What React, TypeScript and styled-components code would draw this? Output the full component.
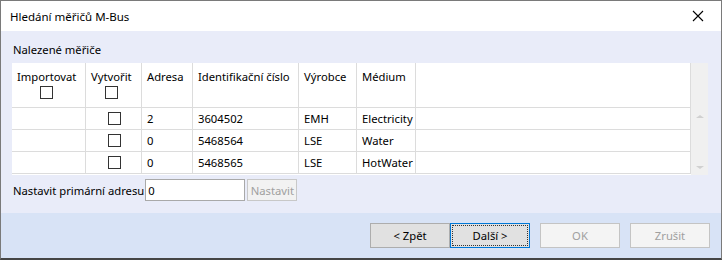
import { Fragment } from 'react';
import styled, { createGlobalStyle } from 'styled-components';

const GlobalStyle = createGlobalStyle`
  html, body {
    margin: 0;
    padding: 0;
    background: #ffffff;
  }
  body {
    font-family: 'Noto Sans', 'Segoe UI', sans-serif;
    font-size: 11.25px;
    color: #000;
  }
`;

const Window = styled.div`
  width: 722px;
  height: 260px;
  box-sizing: border-box;
  border: 1px solid #7a7a7a;
  border-bottom: 2px solid #454545;
  display: flex;
  flex-direction: column;
  background: #d8e3f6;
`;

const TitleBar = styled.div`
  height: 30px;
  flex: none;
  background: #ffffff;
  display: flex;
  align-items: center;
  justify-content: space-between;
  padding: 0 0 0 9px;
`;

const Title = styled.span`
  font-size: 11.5px;
`;

const CloseBtn = styled.div`
  width: 46px;
  height: 30px;
  display: flex;
  align-items: center;
  justify-content: center;
`;

const Body = styled.div`
  background: #e9ecf9;
  padding: 11px 12px 12px 11px;
  display: flex;
  flex-direction: column;
`;

const SectionLabel = styled.div`
  line-height: 16px;
  margin-bottom: 5px;
  padding-left: 1px;
`;

const GridWrap = styled.div`
  display: flex;
  width: 696px;
  height: 112px;
`;

const Grid = styled.div`
  flex: 1;
  background: #ffffff;
  display: grid;
  grid-template-columns: 74px 56px 51px 106px 58px 59px 1fr;
  grid-template-rows: 45px 22px 22px 22px;
`;

const Cell = styled.div<{ $header?: boolean; $center?: boolean }>`
  box-sizing: border-box;
  border-right: 1px solid #dcdcdc;
  border-bottom: 1px solid #dcdcdc;
  padding: ${({ $header }) => ($header ? '6px 4px 0 5px' : '0 4px 0 5px')};
  display: flex;
  flex-direction: column;
  align-items: ${({ $center }) => ($center ? 'center' : 'flex-start')};
  justify-content: ${({ $header }) => ($header ? 'flex-start' : 'center')};
  white-space: nowrap;
  line-height: 16px;
`;

const HeaderStack = styled.div`
  display: inline-flex;
  flex-direction: column;
  align-items: center;
  gap: 1px;
`;

const Check = styled.span`
  display: block;
  width: 13px;
  height: 13px;
  box-sizing: border-box;
  border: 1px solid #333;
  background: #fff;
`;

const ScrollBar = styled.div`
  width: 17px;
  background: #f0f0f0;
  display: flex;
  flex-direction: column;
  justify-content: space-between;
  align-items: center;
  padding: 52px 0 6px;
  box-sizing: border-box;
`;

const Arrow = styled.span<{ $down?: boolean }>`
  width: 0;
  height: 0;
  border-left: 4px solid transparent;
  border-right: 4px solid transparent;
  ${({ $down }) =>
    $down ? 'border-top: 3px solid #d0d0d0;' : 'border-bottom: 3px solid #d0d0d0;'}
`;

const AddressRow = styled.div`
  display: flex;
  align-items: center;
  margin-top: 4px;
  padding-left: 1px;
`;

const Input = styled.div`
  width: 100px;
  height: 22px;
  box-sizing: border-box;
  border: 1px solid #a9a9a9;
  background: #fff;
  margin-left: 1px;
  padding-left: 2px;
  display: flex;
  align-items: center;
`;

const SmallButton = styled.div`
  height: 22px;
  width: 50px;
  box-sizing: border-box;
  margin-left: 2px;
  border: 1px solid #c8c8c8;
  background: #f2f2f2;
  color: #a0a0a0;
  display: flex;
  align-items: center;
  justify-content: center;
`;

const Footer = styled.div`
  flex: 1;
  display: flex;
  justify-content: flex-end;
  align-items: flex-start;
  padding: 10px 11px 0 0;
`;

const Button = styled.div<{ $disabled?: boolean; $focused?: boolean; $gap?: number }>`
  width: 80px;
  height: 25px;
  box-sizing: border-box;
  margin-left: ${({ $gap }) => $gap ?? 0}px;
  border: 1px solid
    ${({ $disabled, $focused }) => ($focused ? '#0078d7' : $disabled ? '#c4c4c4' : '#adadad')};
  background: ${({ $disabled }) => ($disabled ? '#f4f4f4' : '#e1e1e1')};
  color: ${({ $disabled }) => ($disabled ? '#a0a0a0' : '#000')};
  display: flex;
  align-items: center;
  justify-content: center;
  position: relative;
  ${({ $focused }) =>
    $focused
      ? `&::after {
    content: '';
    position: absolute;
    inset: 1px;
    border: 1px dotted #333;
  }`
      : ''}
`;

const rows = [
  { addr: '2', id: '3604502', maker: 'EMH', medium: 'Electricity' },
  { addr: '0', id: '5468564', maker: 'LSE', medium: 'Water' },
  { addr: '0', id: '5468565', maker: 'LSE', medium: 'HotWater' },
];

export default function App() {
  return (
    <>
      <GlobalStyle />
      <Window>
        <TitleBar>
          <Title>Hledání měřičů M-Bus</Title>
          <CloseBtn>
            <svg width="12" height="12" viewBox="0 0 12 12">
              <path d="M1 1 L11 11 M11 1 L1 11" stroke="#000" strokeWidth="1.1" fill="none" />
            </svg>
          </CloseBtn>
        </TitleBar>
        <Body>
          <SectionLabel>Nalezené měřiče</SectionLabel>
          <GridWrap>
            <Grid>
              <Cell $header>
                <HeaderStack>
                  Importovat
                  <Check />
                </HeaderStack>
              </Cell>
              <Cell $header>
                <HeaderStack>
                  Vytvořit
                  <Check />
                </HeaderStack>
              </Cell>
              <Cell $header>Adresa</Cell>
              <Cell $header>Identifikační číslo</Cell>
              <Cell $header>Výrobce</Cell>
              <Cell $header>Médium</Cell>
              <Cell $header />
              {rows.map((r) => (
                <Fragment key={r.id}>
                  <Cell />
                  <Cell $center>
                    <Check />
                  </Cell>
                  <Cell>{r.addr}</Cell>
                  <Cell>{r.id}</Cell>
                  <Cell>{r.maker}</Cell>
                  <Cell>{r.medium}</Cell>
                  <Cell />
                </Fragment>
              ))}
            </Grid>
            <ScrollBar>
              <Arrow />
              <Arrow $down />
            </ScrollBar>
          </GridWrap>
          <AddressRow>
            Nastavit primární adresu
            <Input>0</Input>
            <SmallButton>Nastavit</SmallButton>
          </AddressRow>
        </Body>
        <Footer>
          <Button>&lt; Zpět</Button>
          <Button $focused>Další &gt;</Button>
          <Button $disabled $gap={10}>
            OK
          </Button>
          <Button $disabled $gap={10}>
            Zrušit
          </Button>
        </Footer>
      </Window>
    </>
  );
}
